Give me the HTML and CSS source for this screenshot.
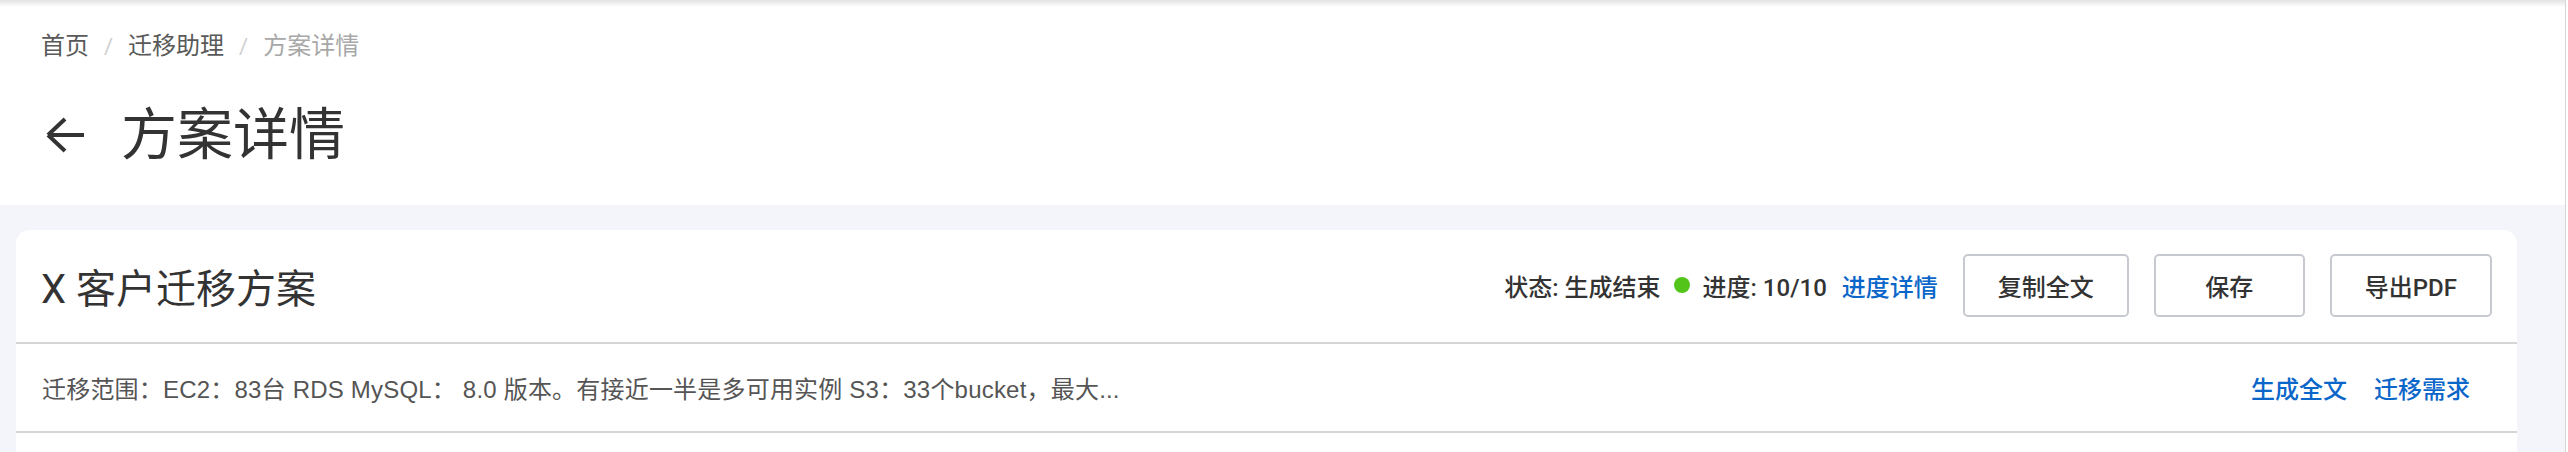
FILE: index.html
```html
<!DOCTYPE html>
<html lang="zh-CN">
<head>
<meta charset="utf-8">
<title>方案详情</title>
<link rel="stylesheet" href="styles.css">
</head>
<body>
<div class="page">
  <header class="topbar">
    <nav class="breadcrumb">
      <span class="crumb">首页</span>
      <span class="sep">/</span>
      <span class="crumb">迁移助理</span>
      <span class="sep">/</span>
      <span class="crumb current">方案详情</span>
    </nav>
    <div class="title-row">
      <svg class="back" width="40" height="36" viewBox="0 0 40 36" aria-hidden="true">
        <path d="M3 18 H39 M3 18 L20 2 M3 18 L20 34" fill="none" stroke="#333" stroke-width="4" stroke-linecap="butt" stroke-linejoin="miter"/>
      </svg>
      <h1 class="page-title">方案详情</h1>
    </div>
  </header>
  <main class="content">
    <section class="card">
      <div class="card-head">
        <h2 class="card-title">X 客户迁移方案</h2>
        <div class="actions">
          <span class="status">状态: 生成结束</span>
          <span class="dot"></span>
          <span class="status">进度: 10/10</span>
          <a class="link detail">进度详情</a>
          <button class="btn">复制全文</button>
          <button class="btn">保存</button>
          <button class="btn">导出PDF</button>
        </div>
      </div>
      <div class="card-row">
        <p class="summary">迁移范围：EC2：83台 RDS MySQL： 8.0 版本。有接近一半是多可用实例 S3：33个bucket，最大...</p>
        <div class="row-links">
          <a class="link">生成全文</a>
          <a class="link">迁移需求</a>
        </div>
      </div>
      <div class="card-body"></div>
    </section>
  </main>
</div>
</body>
</html>
```

FILE: styles.css
```css
* { box-sizing: border-box; }
html, body { margin: 0; padding: 0; }
body {
  background: #ffffff;
  font-family: Roboto, "Noto Sans CJK SC", sans-serif;
  color: #333333;
  height: 452px;
  overflow: hidden;
}
.page {
  width: 2566px;
  height: 452px;
  background: #f4f5fa;
  border-right: 1px solid #d6d6d6;
}
.topbar {
  background: linear-gradient(#e2e2e2, #ffffff 7px);
  height: 205px;
  padding: 30px 0 0 41px;
}
.breadcrumb {
  display: flex;
  align-items: center;
  font-size: 24px;
  line-height: 33px;
  height: 33px;
}
.crumb { color: #595959; }
.crumb.current { color: #a8a8a8; }
.sep {
  color: #d0d0d0;
  margin: 0 15px;
  font-size: 22px;
}
.title-row {
  display: flex;
  align-items: center;
  height: 80px;
  margin-top: 32px;
}
.back {
  display: block;
  margin-left: 4px;
  margin-right: 36px;
}
.page-title {
  margin: 0;
  font-size: 56px;
  font-weight: 400;
  line-height: 80px;
  color: #333333;
}
.content {
  padding: 25px 48px 0 16px;
}
.card {
  background: #ffffff;
  border-radius: 14px 14px 0 0;
  height: 222px;
}
.card-head {
  display: flex;
  align-items: center;
  justify-content: space-between;
  height: 114px;
  padding: 0 25px 2px 25px;
  border-bottom: 2px solid #d5d5d5;
}
.card-title {
  margin: 10px 0 0 0;
  font-size: 40px;
  font-weight: 400;
  line-height: 50px;
  color: #333333;
}
.actions {
  display: flex;
  align-items: center;
}
.status {
  font-size: 24px;
  font-weight: 500;
  color: #333333;
  white-space: pre;
}
.dot {
  width: 16px;
  height: 16px;
  border-radius: 50%;
  background: #52c41a;
  margin: 0 13px;
}
.link {
  font-size: 24px;
  font-weight: 500;
  color: #0b66c9;
  cursor: pointer;
}
.detail { margin-left: 15px; margin-right: 25px; }
.btn {
  font-family: Roboto, "Noto Sans CJK SC", sans-serif;
  font-size: 24px;
  font-weight: 500;
  color: #333333;
  background: #ffffff;
  border: 2px solid #c6c9cf;
  border-radius: 5px;
  height: 63px;
  min-width: 151px;
  padding: 0 33px;
  margin-left: 25px;
}
.btn:first-of-type { margin-left: 0; }
.card-row {
  display: flex;
  align-items: center;
  justify-content: space-between;
  height: 89px;
  padding: 0 47px 0 26px;
  border-bottom: 2px solid #d5d5d5;
}
.summary {
  margin: 0;
  font-family: "Liberation Sans", "Noto Sans CJK SC", sans-serif;
  font-size: 24px;
  letter-spacing: 0.2px;
  color: #555555;
}
.row-links {
  display: flex;
  gap: 27px;
}
```
